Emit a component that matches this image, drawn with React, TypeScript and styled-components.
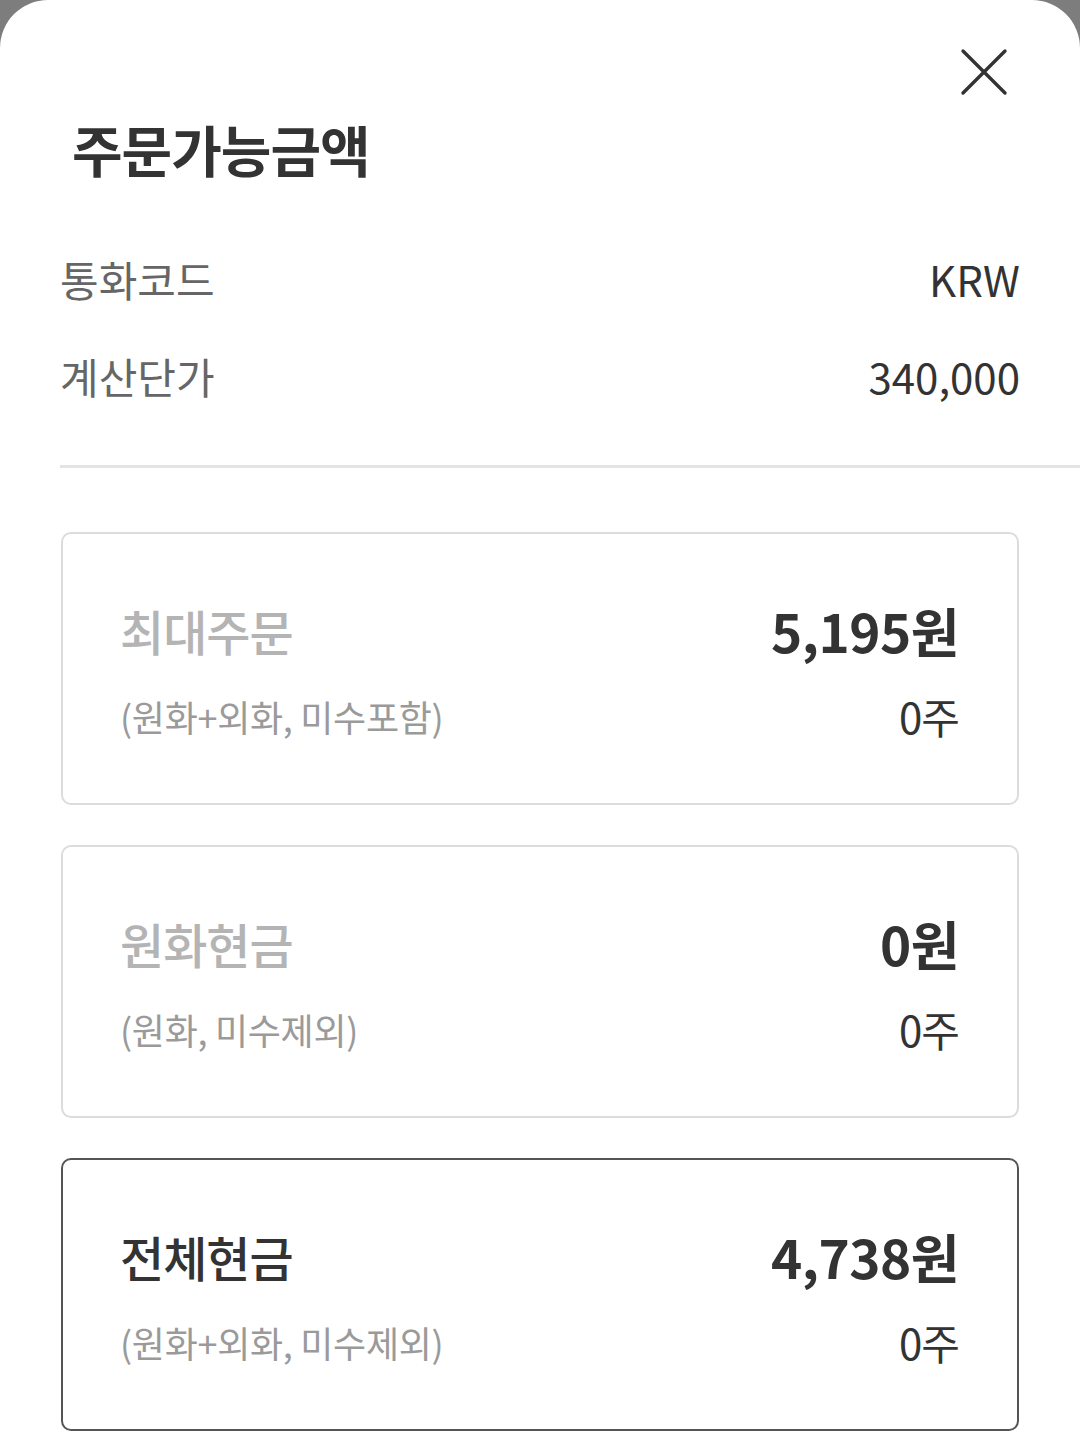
import React from 'react';
import styled, { createGlobalStyle } from 'styled-components';

const GlobalStyle = createGlobalStyle`
    html, body {
        margin: 0;
        padding: 0;
        background: #7d7d7d;
    }
    body {
        font-family: "Noto Sans CJK KR", "Noto Sans", sans-serif;
    }
`;

const Sheet = styled.div`
    box-sizing: border-box;
    width: 1080px;
    min-height: 1437px;
    background: #ffffff;
    border-radius: 48px 48px 0 0;
    padding-left: 60px;
    overflow: hidden;
`;

const CloseRow = styled.div`
    display: flex;
    justify-content: flex-end;
    padding: 46px 70px 0 0;
    height: 52px;
`;

const CloseButton = styled.button`
    width: 52px;
    height: 52px;
    border: 0;
    padding: 0;
    background: none;
    cursor: pointer;
`;

const Title = styled.h1`
    margin: 22px 0 0;
    padding-left: 12px;
    font-size: 55px;
    font-weight: 700;
    line-height: 56px;
    color: #333333;
    letter-spacing: -1px;
`;

const InfoList = styled.div`
    display: flex;
    flex-direction: column;
    gap: 40px;
    padding: 74px 60px 0 0;
`;

const InfoRow = styled.div`
    display: flex;
    justify-content: space-between;
    align-items: center;
    height: 57px;
`;

const InfoLabel = styled.span`
    font-size: 42px;
    color: #666666;
`;

const InfoValue = styled.span`
    font-size: 42px;
    color: #333333;
`;

const Divider = styled.div`
    height: 3px;
    background: #e4e4e8;
    margin-top: 61px;
`;

const CardList = styled.div`
    display: flex;
    flex-direction: column;
    gap: 40px;
    padding: 64px 61px 0 1px;
`;

const Card = styled.div<{ $selected?: boolean }>`
    box-sizing: border-box;
    height: 273px;
    border: 2px solid ${p => (p.$selected ? '#555555' : '#dcdcdc')};
    border-radius: 10px;
    padding: 0 58px 0 57px;
    display: flex;
    flex-direction: column;
    justify-content: center;
    gap: 34px;
`;

const CardRow = styled.div`
    display: flex;
    justify-content: space-between;
    align-items: center;
`;

const CardLabel = styled.span<{ $active?: boolean }>`
    font-size: 48px;
    font-weight: 500;
    line-height: 60px;
    color: ${p => (p.$active ? '#333333' : '#b4b4b4')};
    letter-spacing: -1px;
`;

const Amount = styled.span`
    font-size: 53px;
    font-weight: 700;
    line-height: 60px;
    color: #333333;
    letter-spacing: -0.5px;
`;

const CardSub = styled.span`
    font-size: 36px;
    line-height: 44px;
    color: #9a9a9a;
    letter-spacing: -0.3px;
`;

const Shares = styled.span`
    font-size: 42px;
    line-height: 44px;
    color: #333333;
    letter-spacing: -1px;
`;

const cards = [
    { label: '최대주문', sub: '(원화+외화, 미수포함)', amount: '5,195원', shares: '0주', selected: false },
    { label: '원화현금', sub: '(원화, 미수제외)', amount: '0원', shares: '0주', selected: false },
    { label: '전체현금', sub: '(원화+외화, 미수제외)', amount: '4,738원', shares: '0주', selected: true },
];

const App = () => (
    <>
        <GlobalStyle />
        <Sheet>
            <CloseRow>
                <CloseButton aria-label="닫기">
                    <svg width="52" height="52" viewBox="0 0 52 52">
                        <path d="M5 5 L47 47 M47 5 L5 47" stroke="#333" strokeWidth="3.4" strokeLinecap="round" />
                    </svg>
                </CloseButton>
            </CloseRow>
            <Title>주문가능금액</Title>
            <InfoList>
                <InfoRow>
                    <InfoLabel>통화코드</InfoLabel>
                    <InfoValue>KRW</InfoValue>
                </InfoRow>
                <InfoRow>
                    <InfoLabel>계산단가</InfoLabel>
                    <InfoValue>340,000</InfoValue>
                </InfoRow>
            </InfoList>
            <Divider />
            <CardList>
                {cards.map(c => (
                    <Card key={c.label} $selected={c.selected}>
                        <CardRow>
                            <CardLabel $active={c.selected}>{c.label}</CardLabel>
                            <Amount>{c.amount}</Amount>
                        </CardRow>
                        <CardRow>
                            <CardSub>{c.sub}</CardSub>
                            <Shares>{c.shares}</Shares>
                        </CardRow>
                    </Card>
                ))}
            </CardList>
        </Sheet>
    </>
);

export default App;
